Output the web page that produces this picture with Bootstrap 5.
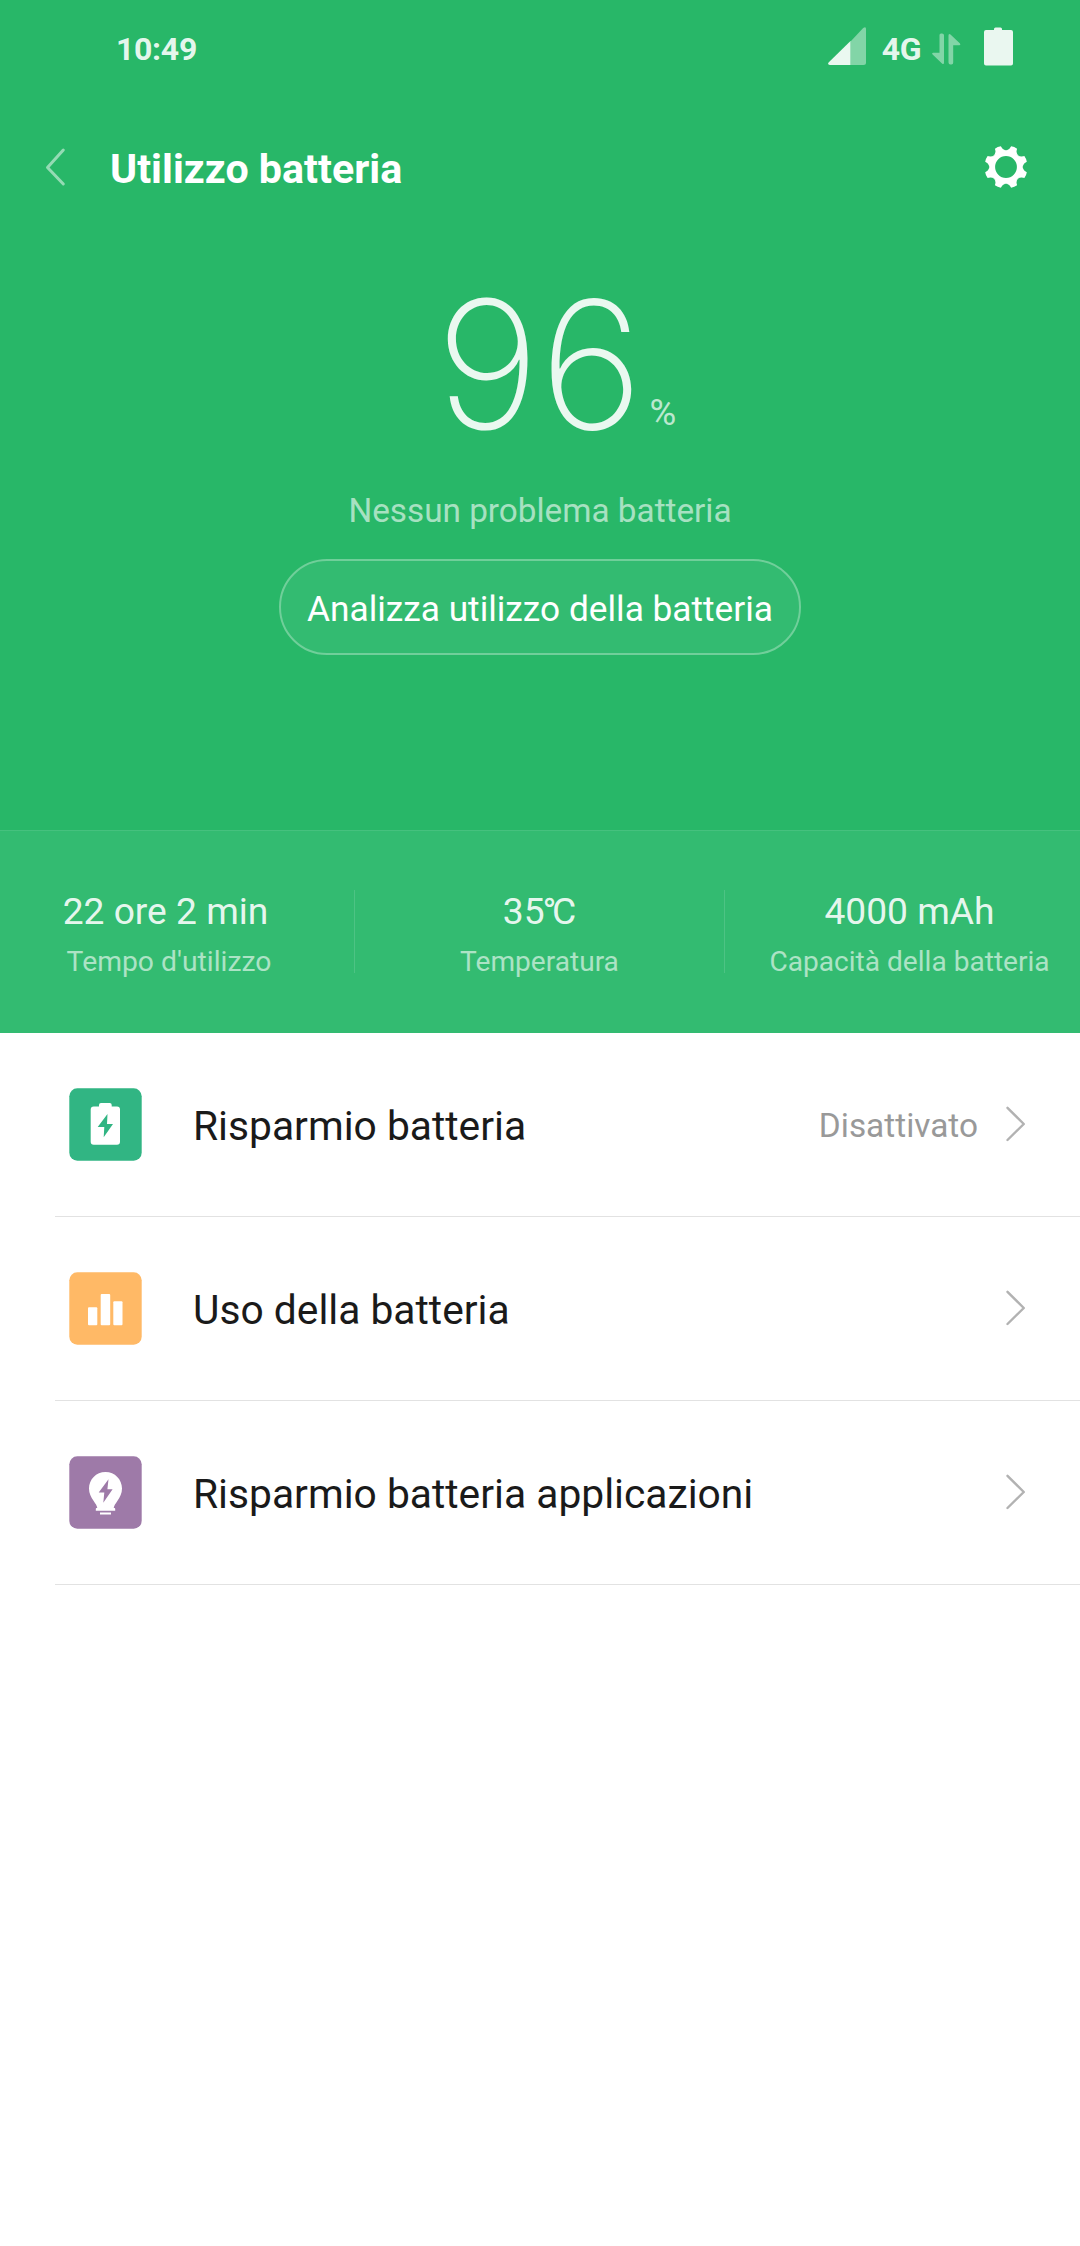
<!DOCTYPE html>
<html lang="it">
<head>
<meta charset="utf-8">
<meta name="viewport" content="width=device-width, initial-scale=1">
<title>Utilizzo batteria</title>
<link href="https://cdn.jsdelivr.net/npm/bootstrap@5.3.0/dist/css/bootstrap.min.css" rel="stylesheet">
<style>
body{font-family:Roboto,"Noto Sans",sans-serif;background:#fff;color:#1a1a1a}
.screen{width:1080px;height:2246px;overflow:hidden}
.screen svg{display:block;flex:none}
.hero{background:#28b768;height:830px}
.statusbar{height:98px;padding:0 67px 0 116px;color:rgba(255,255,255,.9);font-size:32px;font-weight:700;line-height:98px}
.statusbar .signal{margin-top:-6px}
.statusbar .power{margin:-6px 0 0 23px}
.clock{letter-spacing:-.3px}
.net-label{margin:0 11px 0 16px;letter-spacing:-.5px}
.titlebar{height:138px;padding:0 52px 0 45px}
.page-title{color:#fff;font-size:41.2px;font-weight:700;line-height:48px;margin-left:41px;padding-top:4px}
.charge-row{height:229px;padding:29px 0 0 32px}
.charge{font-family:Inter,sans-serif;font-size:178px;font-weight:150;line-height:200px;color:rgba(255,255,255,.9)}
.percent{font-size:36.5px;line-height:40px;color:rgba(255,255,255,.7);margin:128px 0 0 6px}
.verdict{font-size:33.3px;line-height:44px;color:rgba(255,255,255,.6);margin-top:24px}
.analyze,.analyze:hover{width:522px;height:96px;border:2px solid #70cf9a;background:#33bb71;color:#fff;font-size:35.25px;margin-top:26px;padding:4px 0 0}
.stats{height:203px;background:#33bb71;border-top:1px solid #45c17e;padding-top:55px}
.stat-time{width:354px;padding-right:16px}
.stat-temp{width:369px}
.stat-cap{width:355px;padding-left:14px}
.stat-rule{width:1px;height:83px;margin-top:4px;background:#4dc384}
.stat-value{font-size:37.2px;line-height:50px;color:rgba(255,255,255,.9)}
.stat-time .stat-value{padding-right:7px}
.five{letter-spacing:-2px}
.degree{letter-spacing:-4.5px}
.stat-label{font-size:28.1px;line-height:50px;padding-top:1px;color:rgba(255,255,255,.6)}
.stat-time .stat-label{font-size:28.3px}
.item{height:184px;margin-left:55px;border-bottom:1px solid #e2e2e2;padding:0 54px 0 14px}
.item-label{font-size:40.75px;margin-left:51px;padding-top:5px}
.item-state{font-size:33.4px;color:#999;padding-top:4px;margin-right:28px}
.chevron{margin-bottom:1px}
</style>
</head>
<body>
<main class="screen">
  <header class="hero">
    <div class="statusbar d-flex align-items-center">
      <span class="clock">10:49</span>
      <svg class="signal ms-auto" width="38" height="38" viewBox="0 0 38 38"><path d="M22.500 14.500 35.200 1Q38-1 38 2V35.500Q38 38 35.500 38H22.500Z" fill="#fff" opacity=".42"/><path d="M22.500 14V38H1.800Q-1 37.500.8 35.200Z" fill="#fff" opacity=".9"/></svg>
      <span class="net-label">4G</span>
      <svg width="29" height="32" viewBox="0 0 29 32" fill="#fff" opacity=".42"><path d="M7.500 2Q7.500.5 9 .5H10Q12 .5 12 2.300V29.500Q12 32 10 30.500L.6 21.500Q-.5 20 1.200 19.700H7.500Z"/><path d="M16.500 2.500Q16.500 0 18.500 1.500L28 10.500Q29 12 27.500 12.300H21.200V29.500Q21.200 31.500 19.500 31.500H18.500Q16.500 31.500 16.500 29.500Z"/></svg>
      <svg class="power" width="29" height="39" viewBox="0 0 29 39" fill="#fff" opacity=".9"><path d="M10 3V2Q10 .5 11.500 .5H16.500Q18 .5 18 2V3H27Q29 3 29 5V36.500Q29 38.500 27 38.500H2Q0 38.500 0 36.500V5Q0 3 2 3Z"/></svg>
    </div>
    <nav class="titlebar d-flex align-items-center">
      <svg width="24" height="40" viewBox="0 0 24 40"><path d="M18.300 3 2.500 20.500 18.300 37" fill="none" stroke="#fff" stroke-opacity=".5" stroke-width="3" stroke-linecap="round" stroke-linejoin="round"/></svg>
      <h1 class="page-title mb-0">Utilizzo batteria</h1>
      <svg class="ms-auto" width="44" height="44" viewBox="-22 -22 44 44" fill="#fff">
        <defs><path id="tooth" d="M-3.200-21.200Q0-22 3.200-21.200L3.700-18.500Q4.600-16.500 6.400-15.400H-6.400Q-4.600-16.500-3.700-18.500Z"/></defs>
        <circle r="13.800" fill="none" stroke="#fff" stroke-width="5.800"/>
        <use href="#tooth" transform="rotate(22.5)"/><use href="#tooth" transform="rotate(67.5)"/><use href="#tooth" transform="rotate(112.5)"/><use href="#tooth" transform="rotate(157.5)"/><use href="#tooth" transform="rotate(202.5)"/><use href="#tooth" transform="rotate(247.5)"/><use href="#tooth" transform="rotate(292.5)"/><use href="#tooth" transform="rotate(337.5)"/>
      </svg>
    </nav>
    <section class="text-center">
      <div class="charge-row d-flex justify-content-center align-items-start">
        <span class="charge">96</span><span class="percent">%</span>
      </div>
      <p class="verdict mb-0">Nessun problema batteria</p>
      <button type="button" class="analyze btn rounded-pill">Analizza utilizzo della batteria</button>
    </section>
  </header>
  <section class="stats d-flex text-center text-nowrap">
    <div class="stat-time"><div class="stat-value">22 ore 2 min</div><div class="stat-label">Tempo d'utilizzo</div></div>
    <div class="stat-rule"></div>
    <div class="stat-temp"><div class="stat-value">3<span class="five">5</span><span class="degree">°</span>C</div><div class="stat-label">Temperatura</div></div>
    <div class="stat-rule"></div>
    <div class="stat-cap"><div class="stat-value">4000 mAh</div><div class="stat-label">Capacità della batteria</div></div>
  </section>
  <section>
    <div class="item d-flex align-items-center">
      <svg width="73" height="73" viewBox="0 0 73 73"><rect x=".3" y=".3" width="72.400" height="72.400" rx="8" fill="#31b583"/><path d="M30 18.500V17Q30 15 32 15H40.700Q42.700 15 42.700 17V18.500H48Q51 18.500 51 21.500V53.700Q51 56.700 48 56.700H24.700Q21.700 56.700 21.700 53.700V21.500Q21.700 18.500 24.700 18.500Z" fill="#fff"/><path d="M38.500 26 28.700 39H35.300L34.700 49.300 44 36H38Z" fill="#31b583"/></svg>
      <span class="item-label">Risparmio batteria</span>
      <span class="item-state ms-auto">Disattivato</span>
      <svg class="chevron" width="20" height="36" viewBox="0 0 20 36"><path d="M1.500 1.800 17.800 18 1.500 34" fill="none" stroke="#b2b2b2" stroke-width="2.400" stroke-linecap="round" stroke-linejoin="round"/></svg>
    </div>
    <div class="item d-flex align-items-center">
      <svg width="73" height="73" viewBox="0 0 73 73"><rect x=".3" y=".3" width="72.400" height="72.400" rx="8" fill="#ffb966"/><g fill="#fff"><rect x="19" y="35.300" width="9.300" height="17.900" rx="1"/><rect x="31.700" y="22" width="9.500" height="31.200" rx="1"/><rect x="44.300" y="29.200" width="9.200" height="24" rx="1"/></g></svg>
      <span class="item-label">Uso della batteria</span>
      <svg class="chevron ms-auto" width="20" height="36" viewBox="0 0 20 36"><path d="M1.500 1.800 17.800 18 1.500 34" fill="none" stroke="#b2b2b2" stroke-width="2.400" stroke-linecap="round" stroke-linejoin="round"/></svg>
    </div>
    <div class="item d-flex align-items-center">
      <svg width="73" height="73" viewBox="0 0 73 73"><rect x=".3" y=".3" width="72.400" height="72.400" rx="8" fill="#9e7aa8"/><path d="M36.500 16C27 16 20 23.500 20 32.500C20 37.500 22 41 24.500 44.800C26.700 48 27.800 49.500 28.300 52H27.500Q26.800 52 26.800 53V54.700H46.200V53Q46.200 52 45.500 52H44.700C45.200 49.500 46.300 48 48.500 44.800C51 41 53 37.500 53 32.500C53 23.500 46 16 36.500 16ZM31 56.400H42V58.600H31Z" fill="#fff"/><path d="M39.500 23.300 29.700 36.500H35.300L34.300 46.700 43.600 33.300H38.400Z" fill="#9e7aa8"/></svg>
      <span class="item-label">Risparmio batteria applicazioni</span>
      <svg class="chevron ms-auto" width="20" height="36" viewBox="0 0 20 36"><path d="M1.500 1.800 17.800 18 1.500 34" fill="none" stroke="#b2b2b2" stroke-width="2.400" stroke-linecap="round" stroke-linejoin="round"/></svg>
    </div>
  </section>
</main>
<script src="https://cdn.jsdelivr.net/npm/bootstrap@5.3.0/dist/js/bootstrap.bundle.min.js"></script>
</body>
</html>
